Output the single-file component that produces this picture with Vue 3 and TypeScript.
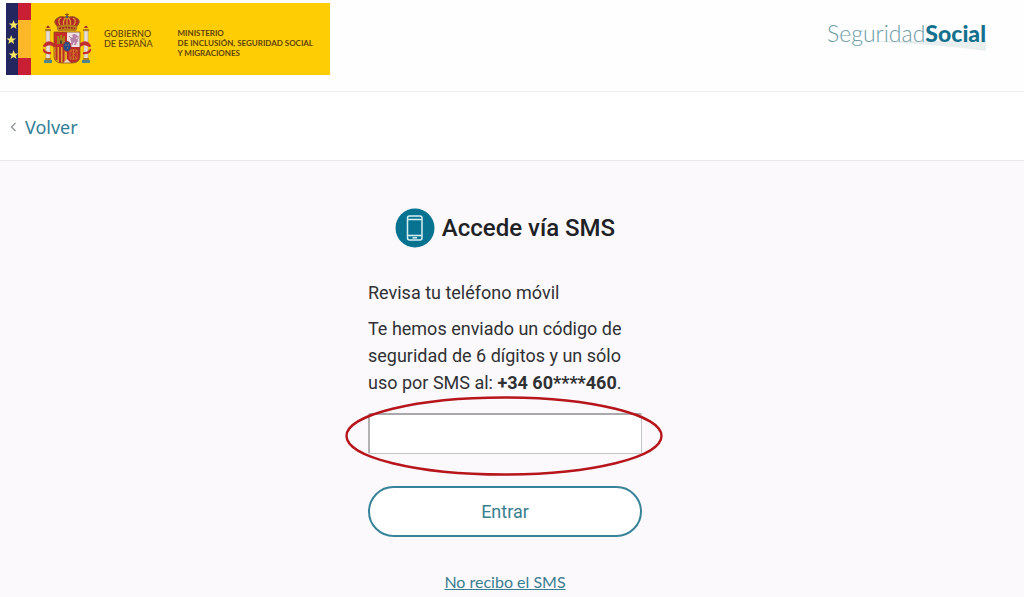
<script setup lang="ts">
import { ref } from 'vue'

const phone = '+34 60****460'
const code = ref('')
const starRows = [
  { x: 7.6, y: 22 },
  { x: 5.2, y: 37 },
  { x: 7.6, y: 52 },
]
const starPath = 'M0 -5 L1.3 -1.6 L4.8 -1.5 L2 .7 L3 4 L0 2.1 L-3 4 L-2 .7 L-4.8 -1.5 L-1.3 -1.6 Z'
</script>

<template>
  <div class="page">
    <header class="header">
      <div class="government">
        <svg class="flags" viewBox="0 0 25 72" aria-hidden="true">
          <rect width="12" height="72" fill="#23265f" />
          <rect x="12" width="13" height="72" fill="#fdb827" />
          <rect x="12" width="13" height="17" fill="#c91f35" />
          <rect x="12" y="55" width="13" height="17" fill="#c91f35" />
          <path
            v-for="star in starRows"
            :key="star.y"
            :d="starPath"
            :transform="`translate(${star.x} ${star.y})`"
            fill="#f5e663"
          />
        </svg>
        <svg class="arms" viewBox="0 0 48 52" role="img" aria-label="Escudo de España">
          <!-- Pillars -->
          <g>
            <rect x="3" y="18" width="4" height="29" fill="#e9dfd0" stroke="#a79a86" stroke-width=".5" />
            <rect x="41" y="18" width="4" height="29" fill="#e9dfd0" stroke="#a79a86" stroke-width=".5" />
            <path d="M2 18h6v-2H2zM40 18h6v-2h-6z" fill="#b57b19" />
            <path d="M3 15q2-5 4 0zM41 15q2-5 4 0z" fill="#a92c2c" />
            <path d="M1 47h8v3H1zM39 47h8v3h-8z" fill="#51858c" />
            <path d="M2 45h6v2H2zM40 45h6v2h-6z" fill="#b57b19" />
            <path d="M1 31q3-4 8-2l3 2v4q-4-4-8-2t-4 0zM47 31q-3-4-8-2l-3 2v4q4-4 8-2t4 0z" fill="#c62e2e" />
            <path d="M0 36q2 5 8 4M48 36q-2 5-8 4" fill="none" stroke="#c62e2e" stroke-width="2.2" />
          </g>
          <!-- Crown -->
          <path d="M14 13Q10 9 13 6q4-4 9-2l2-2 2 2q5-2 9 2 3 3-1 7l-1 4H15z" fill="#b22a25" stroke="#9a691c" />
          <path d="M17 12Q14 7 18 5M31 12q3-5-1-7M21 13q-2-6 3-9 5 3 3 9M24 4v9" fill="none" stroke="#dda328" stroke-width="1.2" />
          <path d="M24 0v4M22 1.5h4" stroke="#8c571b" stroke-width="1" />
          <circle cx="24" cy="4" r="1.2" fill="#425d73" />
          <path d="M14 13q10-3 20 0l-1 5H15z" fill="#b87b20" />
          <path d="M16 15.5q8-2 16 0" fill="none" stroke="#a52424" stroke-width="1.5" stroke-dasharray="2 1" />
          <!-- Shield quarters: castle, lion, bars and chains -->
          <path d="M11 19h13v15H11z" fill="#c92b2a" />
          <path d="M24 19h13v15H24z" fill="#eee1df" />
          <path d="M11 34h13v16h-5q-8 0-8-7z" fill="#e3a322" />
          <path d="M24 34h13v9q0 7-8 7h-5z" fill="#bd2b29" />
          <path d="M14 31v-8h2v2h1v-3h2v3h1v-2h2v8z" fill="#a87a1c" />
          <path d="M17 31v-3q1-2 2 0v3z" fill="#554824" />
          <path d="M27 31q2-1 1-3l-1-2 3-2-1-2 2-1 3 1 1 2-2 1 1 2 2 1-2 1-1 3h-2l1-3-2 1v2z" fill="#b780a5" />
          <path d="M26 23q1 2 3 2M33 27q3 0 2-4" fill="none" stroke="#b780a5" stroke-width="1" />
          <path d="M13.500 34v13M17 34v16M20.500 34v16" stroke="#b92e28" stroke-width="2" />
          <path d="M27 37h7v9h-7zM27 37l7 9M34 37l-7 9M30.500 36v11" fill="none" stroke="#cf8027" stroke-width=".8" />
          <path d="M20 50l4-4 4 4z" fill="#e6d4bf" />
          <path d="M11 19h26v24q0 7-8 7h-10q-8 0-8-7z" fill="none" stroke="#87521f" stroke-width=".8" />
          <ellipse cx="24" cy="33.500" rx="4" ry="5" fill="#294b86" stroke="#ac3030" />
          <path d="M22.500 32h1M25 32h1M24 35h1" stroke="#b98c68" stroke-width="1" />
        </svg>
        <p class="country">GOBIERNO<br />DE ESPAÑA</p>
        <p class="ministry">MINISTERIO<br />DE INCLUSIÓN, SEGURIDAD SOCIAL<br />Y MIGRACIONES</p>
      </div>
      <div class="brand">
        <svg class="swoosh" viewBox="0 0 110 10" preserveAspectRatio="none" aria-hidden="true">
          <path d="M0 0H110V10Q60 3 0 1Z" fill="#e9eeee" />
        </svg>
        <span class="wordmark">Seguridad<b>Social</b></span>
      </div>
    </header>

    <nav class="nav" aria-label="Navegación">
      <a class="back" href="#">
        <svg viewBox="0 0 7 10" aria-hidden="true">
          <path d="M5.500 1L1.500 5L5.500 9" fill="none" stroke="#8b9095" stroke-width="1.2" />
        </svg>
        Volver
      </a>
    </nav>

    <main class="main">
      <form class="access" @submit.prevent>
        <h1 class="title">
          <svg viewBox="0 0 40 40" aria-hidden="true">
            <circle cx="20" cy="20" r="19.500" fill="#077391" />
            <g fill="none" stroke="#d8f0f4" stroke-width="1.5">
              <rect x="12.500" y="8" width="14.500" height="24" rx="2" />
              <path d="M12.500 11.500H27M12.500 27.500H27" />
              <path d="M17.500 29.800H22" />
            </g>
          </svg>
          <span>Accede vía SMS</span>
        </h1>
        <p class="lead">Revisa tu teléfono móvil</p>
        <label class="message" for="sms-code">
          Te hemos enviado un código de seguridad de 6 dígitos y un sólo uso por SMS al: <strong>{{ phone }}</strong>.
        </label>
        <div class="field">
          <input id="sms-code" v-model="code" type="text" inputmode="numeric" autocomplete="one-time-code" />
          <svg class="highlight" viewBox="0 0 318 80" aria-hidden="true">
            <ellipse cx="159" cy="40" rx="157.500" ry="38.500" fill="none" stroke="#b5151b" stroke-width="2.400" />
          </svg>
        </div>
        <button class="submit" type="submit">Entrar</button>
        <a class="resend" href="#">No recibo el SMS</a>
      </form>
    </main>
  </div>
</template>

<style>
body {
  margin: 0;
  background: #fbf9fc;
}
</style>

<style scoped>
.page {
  min-height: 100vh;
  overflow: hidden;
  box-sizing: border-box;
  background: #fbf9fc;
  color: #303133;
  font-family: Roboto, "Liberation Sans", sans-serif;
}

.header {
  display: flex;
  justify-content: space-between;
  align-items: flex-start;
  padding: 3px 38px 16px 6px;
  background: #fefefe;
  border-bottom: 1px solid #ededf0;
}

.government {
  display: flex;
  align-items: center;
  width: 324px;
  height: 72px;
  background: #ffcd03;
  color: #5c430c;
  font-family: Lato, sans-serif;
  font-weight: 500;
}

.flags {
  width: 25px;
  height: 72px;
}

.arms {
  width: 48px;
  height: 52px;
  margin-left: 12px;
}

.country,
.ministry {
  margin: 0;
  font-size: 9px;
  line-height: 10px;
  white-space: nowrap;
}

.country {
  margin-left: 13px;
}

.ministry {
  margin-left: 25px;
  padding-top: 8px;
  font-size: 8px;
  font-weight: 700;
}

.brand {
  position: relative;
  padding-top: 14px;
}

.wordmark {
  position: relative;
  color: #6c9ca6;
  font-family: Lato, sans-serif;
  font-size: 23px;
  font-weight: 300;
  line-height: 32px;
}

.wordmark b {
  color: #14718d;
  font-weight: 900;
}

.swoosh {
  position: absolute;
  right: 0;
  top: 38px;
  width: 110px;
  height: 10px;
}

.nav {
  display: flex;
  align-items: center;
  height: 68px;
  padding-left: 10px;
  background: #fff;
  border-bottom: 1px solid #e9e8ec;
}

.back {
  display: flex;
  align-items: center;
  gap: 8px;
  padding-top: 2px;
  color: #337e96;
  font-family: "Noto Sans", sans-serif;
  font-size: 18px;
  line-height: 28px;
  text-decoration: none;
}

.back svg {
  width: 7px;
  height: 10px;
}

.main {
  display: flex;
  justify-content: center;
  padding: 47px 14px 0 0;
}

.access {
  display: flex;
  flex-direction: column;
  width: 274px;
}

.title {
  display: flex;
  align-items: center;
  align-self: center;
  gap: 7px;
  margin: 0 0 31px;
  color: #202124;
  font-size: 24px;
  font-weight: 500;
  line-height: 40px;
  white-space: nowrap;
}

.title svg {
  width: 40px;
  height: 40px;
}

.lead,
.message {
  margin: 0 0 9px;
  font-size: 18px;
  line-height: 27px;
}

.message {
  margin-bottom: 17px;
}

.message strong {
  font-weight: 700;
}

.field {
  position: relative;
  margin-bottom: 32px;
}

.field input {
  display: block;
  box-sizing: border-box;
  width: 100%;
  height: 41px;
  padding: 0 12px;
  background: #fff;
  border: 1px solid #c3c3c5;
  border-top: 2px solid #a9a9ab;
  border-left: 2px solid #b2b2b4;
  border-radius: 2px;
  color: #303133;
  font: inherit;
  font-size: 18px;
}

.highlight {
  position: absolute;
  top: -17px;
  left: -23px;
  width: 318px;
  height: 80px;
  pointer-events: none;
}

.submit {
  height: 51px;
  background: #fff;
  border: 2px solid #378399;
  border-radius: 26px;
  color: #397e90;
  font-family: inherit;
  font-size: 18px;
  cursor: pointer;
}

.resend {
  align-self: center;
  margin-top: 33px;
  color: #397e90;
  font-family: Lato, sans-serif;
  font-size: 16px;
  line-height: 24px;
}
</style>
